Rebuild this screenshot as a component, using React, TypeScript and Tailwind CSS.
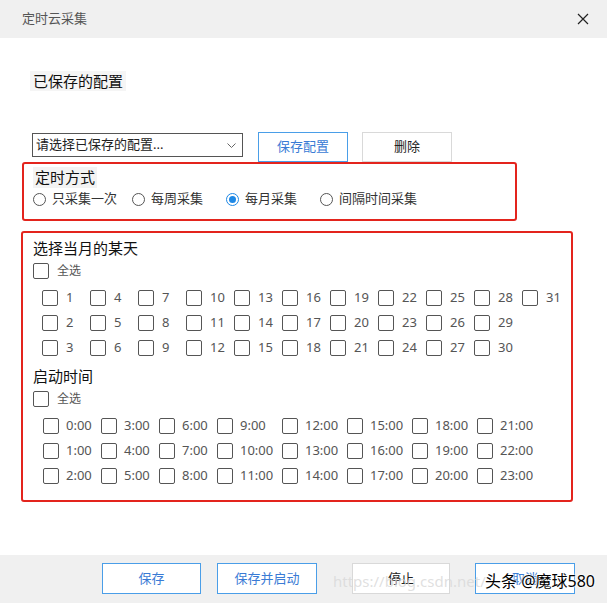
import React from 'react';

const font = { fontFamily: '"Noto Sans", "Noto Sans CJK SC", sans-serif' };

const dayRows = [
  [1, 4, 7, 10, 13, 16, 19, 22, 25, 28, 31],
  [2, 5, 8, 11, 14, 17, 20, 23, 26, 29],
  [3, 6, 9, 12, 15, 18, 21, 24, 27, 30],
];

const timeCols = [
  { w: 'w-[58px]', items: ['0:00', '1:00', '2:00'] },
  { w: 'w-[58px]', items: ['3:00', '4:00', '5:00'] },
  { w: 'w-[58px]', items: ['6:00', '7:00', '8:00'] },
  { w: 'w-[65px]', items: ['9:00', '10:00', '11:00'] },
  { w: 'w-[65px]', items: ['12:00', '13:00', '14:00'] },
  { w: 'w-[65px]', items: ['15:00', '16:00', '17:00'] },
  { w: 'w-[65px]', items: ['18:00', '19:00', '20:00'] },
  { w: 'w-[65px]', items: ['21:00', '22:00', '23:00'] },
];

function Box() {
  return <span className="w-4 h-4 shrink-0 border border-[#555] rounded-[2px] bg-white" />;
}

function Radio({ label, checked, w }: { label: string; checked?: boolean; w: string }) {
  return (
    <div className={`flex items-center gap-[6px] ${w}`}>
      <span
        className={`w-[13px] h-[13px] rounded-full border flex items-center justify-center ${
          checked ? 'border-[#1e88e5]' : 'border-[#555]'
        }`}
      >
        {checked && <span className="w-[7px] h-[7px] rounded-full bg-[#1e88e5]" />}
      </span>
      <span className="text-[13px] text-[#333]">{label}</span>
    </div>
  );
}

export default function App() {
  return (
    <div className="relative w-[607px] h-[603px] bg-white flex flex-col overflow-hidden" style={font}>
      {/* title bar */}
      <div className="h-[38px] bg-[#f0f0f0] flex items-center justify-between pl-[22px] pr-[18px]">
        <span className="text-[13px] text-[#555]">定时云采集</span>
        <svg className="w-[12px] h-[12px]" viewBox="0 0 12 12" fill="none" stroke="#222" strokeWidth={1.2}>
          <path d="M1 1l10 10M11 1L1 11" />
        </svg>
      </div>

      {/* saved config */}
      <div className="ml-[30px] mt-[33px] self-start bg-[#f5f5f5] px-[3px] h-[20px] flex items-center text-[15px] text-[#111]">
        已保存的配置
      </div>

      <div className="flex items-start mt-[41px] ml-[32px]">
        <div className="mt-[1px] w-[211px] h-[24px] border border-[#555] flex items-center justify-between pl-[3px] pr-[6px]">
          <span className="text-[13px] text-[#222]">请选择已保存的配置...</span>
          <svg className="w-[9px] h-[5px]" viewBox="0 0 9 5" fill="none" stroke="#666" strokeWidth={1}>
            <path d="M0.5 0.5l4 4 4-4" />
          </svg>
        </div>
        <button className="ml-[15px] w-[90px] h-[30px] border border-[#4a9ee8] text-[13px] text-[#3a7bd5] bg-white">
          保存配置
        </button>
        <button className="ml-[14px] w-[90px] h-[30px] border border-[#d9d9d9] text-[13px] text-[#222] bg-white">
          删除
        </button>
      </div>

      {/* timing mode */}
      <div className="ml-[22px] w-[495px] h-[59px] border-2 border-[#e3241d] rounded-[3px] flex flex-col pl-[9px] relative">
        <div className="mt-[3px] self-start bg-[#f3f3f3] px-[2px] h-[21px] flex items-center text-[15px] text-[#111]">
          定时方式
        </div>
        <div className="flex items-center mt-[3px] h-[16px]">
          <Radio label="只采集一次" w="w-[99px]" />
          <Radio label="每周采集" w="w-[94px]" />
          <Radio label="每月采集" w="w-[94px]" checked />
          <Radio label="间隔时间采集" w="w-[110px]" />
        </div>
      </div>

      {/* day / time selection */}
      <div className="mt-[10px] ml-[21px] w-[552px] h-[271px] border-2 border-[#e3241d] rounded-[3px] flex flex-col pl-[10px]">
        <div className="mt-[5px] h-[20px] flex items-center text-[15px] text-[#111]">选择当月的某天</div>
        <div className="mt-[3px] h-[20px] flex items-center gap-[8px]">
          <Box />
          <span className="text-[12px] text-[#555]">全选</span>
        </div>
        <div className="mt-[4px] ml-[9px] flex flex-col">
          {dayRows.map((row, i) => (
            <div key={i} className="flex h-[25px] items-center">
              {row.map((d) => (
                <div key={d} className="w-[48px] flex items-center gap-[8px]">
                  <Box />
                  <span className="text-[13px] text-[#555]">{d}</span>
                </div>
              ))}
            </div>
          ))}
        </div>

        <div className="mt-[6px] h-[20px] flex items-center text-[15px] text-[#111]">启动时间</div>
        <div className="mt-[3px] h-[20px] flex items-center gap-[8px]">
          <Box />
          <span className="text-[12px] text-[#555]">全选</span>
        </div>
        <div className="mt-[4px] ml-[10px] flex">
          {timeCols.map((col, i) => (
            <div key={i} className={`flex flex-col ${col.w}`}>
              {col.items.map((t) => (
                <div key={t} className="h-[25px] flex items-center gap-[7px]">
                  <Box />
                  <span className="text-[13px] text-[#555]">{t}</span>
                </div>
              ))}
            </div>
          ))}
        </div>
      </div>

      {/* footer */}
      <div className="mt-auto h-[48px] bg-[#f0f0f0] flex items-start pt-[8px]">
        <button className="ml-[102px] w-[99px] h-[31px] border border-[#4a9ee8] bg-white text-[13px] text-[#3a7bd5]">
          保存
        </button>
        <button className="ml-[16px] w-[100px] h-[31px] border border-[#4a9ee8] bg-white text-[13px] text-[#3a7bd5]">
          保存并启动
        </button>
        <button className="ml-[35px] w-[98px] h-[31px] border border-[#d9d9d9] bg-white text-[13px] text-[#222]">
          停止
        </button>
        <button className="ml-[25px] w-[100px] h-[31px] border border-[#4a9ee8] bg-white text-[13px] text-[#3a7bd5]">
          取消
        </button>
      </div>

      {/* watermarks */}
      <div className="absolute left-[333px] top-[570px] text-[15px] text-[#d8d8d8]/80 whitespace-nowrap">
        https://blog.csdn.net/
      </div>
      <div
        className="absolute left-[485px] top-[569px] text-[16px] text-black whitespace-nowrap"
        style={{ textShadow: '0 0 2px #fff, 0 0 2px #fff, 0 0 3px #fff' }}
      >
        头条 @魔球580
      </div>
    </div>
  );
}
